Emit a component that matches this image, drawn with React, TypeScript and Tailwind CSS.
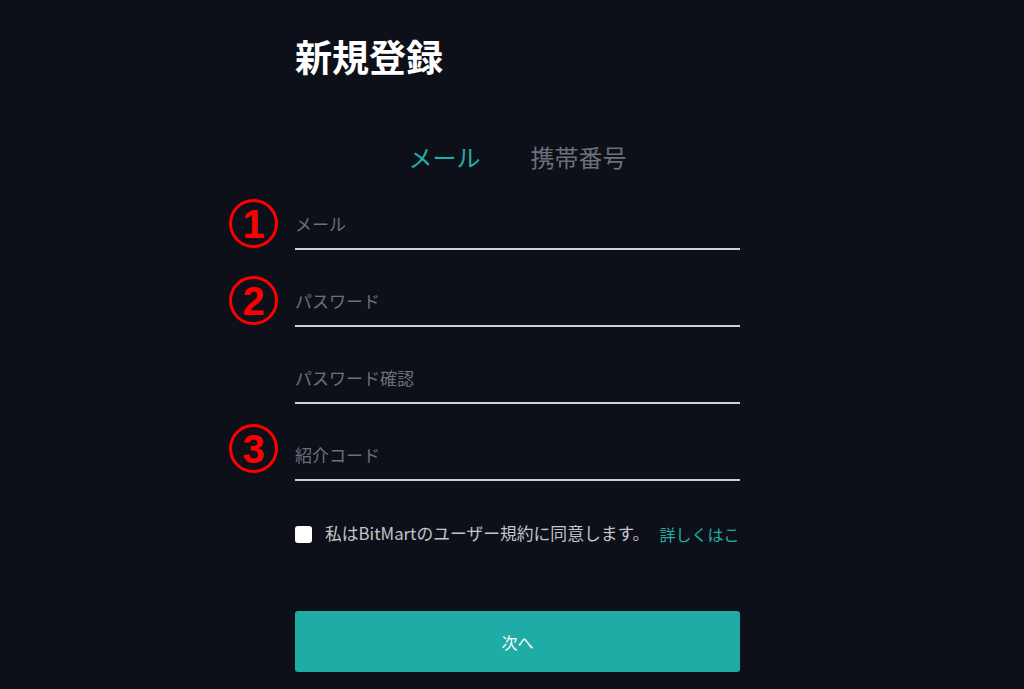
import * as React from "react";

const font = { fontFamily: '"Noto Sans CJK JP", "Noto Sans", sans-serif' };

const Marker = ({ n, className }: { n: string; className: string }) => {
	return (
		<div
			className={
				"absolute left-[-66px] w-[49px] h-[49px] rounded-full border-[3px] border-[#ff0000] flex items-center justify-center " +
				className
			}
		>
			<span
				className="text-[#ff0000] text-[40px] font-bold leading-none"
				style={{ fontFamily: '"Liberation Sans", Arial, sans-serif' }}
			>
				{n}
			</span>
		</div>
	);
};

const Field = ({
	placeholder,
	marker,
	markerTop,
	type = "text",
}: {
	placeholder: string;
	marker?: string;
	markerTop?: string;
	type?: string;
}) => {
	return (
		<div className="relative">
			{marker && <Marker n={marker} className={markerTop || "top-[-3px]"} />}
			<input
				type={type}
				placeholder={placeholder}
				className="w-full h-[42px] pb-[4px] box-content bg-transparent text-[17px] text-white placeholder:text-[#6c707a] outline-none border-b-2 border-[#cfd0d2]"
			/>
		</div>
	);
};

export default function App() {
	const [tab, setTab] = React.useState("mail");
	const [agree, setAgree] = React.useState(false);

	return (
		<div className="min-h-[689px] w-full bg-[#0d1018] overflow-hidden" style={font}>
			<div className="ml-[295px] w-[445px] flex flex-col">
				<h1 className="mt-[35px] text-[37px] leading-[43px] font-bold text-white">
					新規登録
				</h1>

				<div className="mt-[63px] flex justify-center gap-[50px] text-[24px] leading-[32px]">
					<button
						className={tab === "mail" ? "text-[#22aea7]" : "text-[#6c707a]"}
						onClick={() => setTab("mail")}
					>
						メール
					</button>
					<button
						className={tab === "phone" ? "text-[#22aea7]" : "text-[#6c707a]"}
						onClick={() => setTab("phone")}
					>
						携帯番号
					</button>
				</div>

				<div className="mt-[29px] flex flex-col gap-[29px]">
					<Field placeholder="メール" marker="1" markerTop="top-[-3px]" />
					<Field placeholder="パスワード" type="password" marker="2" markerTop="top-[-3px]" />
					<Field placeholder="パスワード確認" type="password" />
					<Field placeholder="紹介コード" marker="3" markerTop="top-[-9px]" />
				</div>

				<div className="mt-[41px] h-[24px] flex items-center whitespace-nowrap">
					<button
						onClick={() => setAgree(!agree)}
						className="shrink-0 w-[17px] h-[17px] rounded-[3px] bg-white mr-[13px] flex items-center justify-center"
					>
						{agree && <span className="text-[12px] leading-none text-[#0d1018]">✓</span>}
					</button>
					<span className="text-[#c3c5ca] text-[16.8px]">
						私はBitMartのユーザー規約に同意します。
					</span>
					<span className="ml-[10px] text-[#22aea7] text-[16px]">詳しくはこ</span>
				</div>

				<button className="mt-[65px] h-[61px] w-full rounded-[3px] bg-[#1faca6] text-white text-[16px]">
					次へ
				</button>
			</div>
		</div>
	);
}
